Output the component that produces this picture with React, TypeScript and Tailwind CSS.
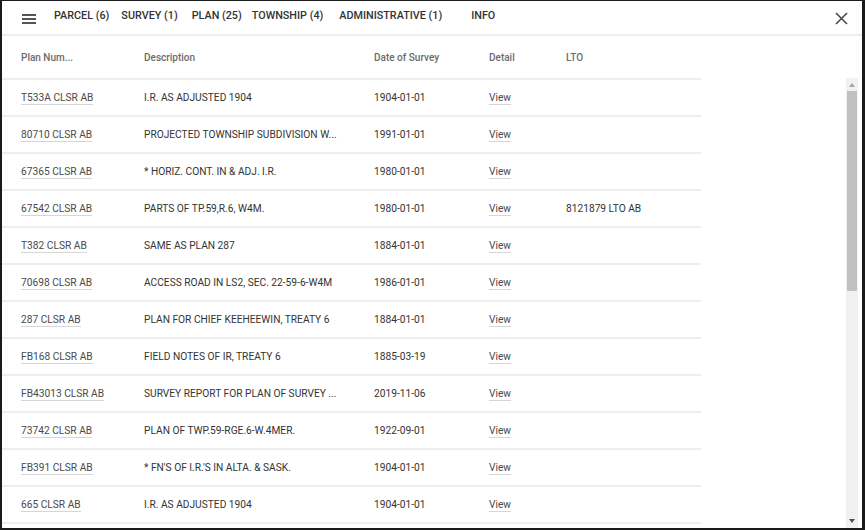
import React from "react";

type Row = { plan: string; desc: string; date: string; lto?: string };

const rows: Row[] = [
  { plan: "T533A CLSR AB", desc: "I.R. AS ADJUSTED 1904", date: "1904-01-01" },
  { plan: "80710 CLSR AB", desc: "PROJECTED TOWNSHIP SUBDIVISION W...", date: "1991-01-01" },
  { plan: "67365 CLSR AB", desc: "* HORIZ. CONT. IN & ADJ. I.R.", date: "1980-01-01" },
  { plan: "67542 CLSR AB", desc: "PARTS OF TP.59,R.6, W4M.", date: "1980-01-01", lto: "8121879 LTO AB" },
  { plan: "T382 CLSR AB", desc: "SAME AS PLAN 287", date: "1884-01-01" },
  { plan: "70698 CLSR AB", desc: "ACCESS ROAD IN LS2, SEC. 22-59-6-W4M", date: "1986-01-01" },
  { plan: "287 CLSR AB", desc: "PLAN FOR CHIEF KEEHEEWIN, TREATY 6", date: "1884-01-01" },
  { plan: "FB168 CLSR AB", desc: "FIELD NOTES OF IR, TREATY 6", date: "1885-03-19" },
  { plan: "FB43013 CLSR AB", desc: "SURVEY REPORT FOR PLAN OF SURVEY ...", date: "2019-11-06" },
  { plan: "73742 CLSR AB", desc: "PLAN OF TWP.59-RGE.6-W.4MER.", date: "1922-09-01" },
  { plan: "FB391 CLSR AB", desc: "* FN'S OF I.R.'S IN ALTA. & SASK.", date: "1904-01-01" },
  { plan: "665 CLSR AB", desc: "I.R. AS ADJUSTED 1904", date: "1904-01-01" },
  { plan: "", desc: "", date: "" },
];

const font = { fontFamily: "Roboto, 'Liberation Sans', sans-serif" };

export default function App() {
  return (
    <div
      className="w-[865px] h-[530px] bg-white border-t border-l-2 border-r-[3px] border-b-2 border-[#1a1a1a] flex flex-col overflow-hidden"
      style={font}
    >
      {/* Nav */}
      <div className="h-[33px] flex items-center shrink-0 text-[10.8px] font-medium text-[#333] pb-[2px]">
        <div className="ml-[20px] w-[14px] flex flex-col gap-[2px] mt-[5px]">
          <div className="h-[2px] bg-[#555]" />
          <div className="h-[2px] bg-[#555]" />
          <div className="h-[2px] bg-[#555]" />
        </div>
        <span className="ml-[18px]">PARCEL (6)</span>
        <span className="ml-[12px]">SURVEY (1)</span>
        <span className="ml-[14px]">PLAN (25)</span>
        <span className="ml-[10px]">TOWNSHIP (4)</span>
        <span className="ml-[16px]">ADMINISTRATIVE (1)</span>
        <span className="ml-[29px]">INFO</span>
        <div className="flex-1" />
        <svg width="13" height="13" viewBox="0 0 13 13" className="mr-[14px] mt-[3px]">
          <path d="M1 1 L12 12 M12 1 L1 12" stroke="#444" strokeWidth="1.5" fill="none" />
        </svg>
      </div>
      <div className="h-[2px] bg-[#eeeeee] shrink-0" />

      {/* Header */}
      <div className="w-[699px] h-[42px] shrink-0 grid grid-cols-[123px_230px_115px_77px_1fr] items-center pl-[19px] text-[10px] font-medium text-[#6b6b6b]">
        <span>Plan Num...</span>
        <span>Description</span>
        <span>Date of Survey</span>
        <span>Detail</span>
        <span>LTO</span>
      </div>

      {/* Body */}
      <div className="flex flex-1 min-h-0">
        <div className="w-[699px] flex flex-col">
          {rows.map((r, i) => (
            <div key={i} className="flex flex-col shrink-0">
              <div className="h-[2px] bg-[#eeeeee]" />
              <div className="h-[35px] grid grid-cols-[123px_230px_115px_77px_1fr] items-center pl-[19px] text-[10.2px] text-[#333]">
                <span>
                  {r.plan && (
                    <span className="text-[#4a4a4a] border-b border-[#d6d6d6] pb-[1px]">{r.plan}</span>
                  )}
                </span>
                <span className="whitespace-nowrap">{r.desc}</span>
                <span>{r.date}</span>
                <span>
                  {r.plan && (
                    <span className="text-[#4a4a4a] border-b border-[#d6d6d6] pb-[1px]">View</span>
                  )}
                </span>
                <span>{r.lto ?? ""}</span>
              </div>
            </div>
          ))}
        </div>
        <div className="flex-1" />
        {/* Scrollbar */}
        <div className="w-[12px] mr-[4px] bg-[#f1f1f1] flex flex-col items-center">
          <div className="h-[13px] flex items-center justify-center">
            <svg width="6" height="4" viewBox="0 0 6 4">
              <path d="M0 4 L3 0 L6 4 Z" fill="#a3a3a3" />
            </svg>
          </div>
          <div className="w-[10px] h-[200px] bg-[#c1c1c1]" />
          <div className="flex-1" />
          <div className="h-[14px] flex items-center justify-center">
            <svg width="6" height="4" viewBox="0 0 6 4">
              <path d="M0 0 L6 0 L3 4 Z" fill="#505050" />
            </svg>
          </div>
        </div>
      </div>
    </div>
  );
}
